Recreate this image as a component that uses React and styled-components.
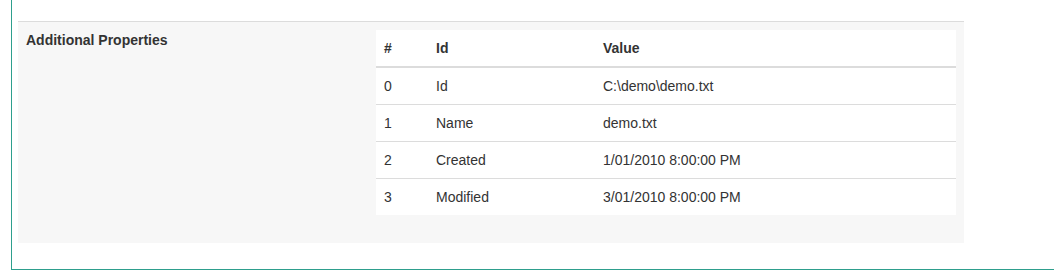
import React from "react";
import styled, { createGlobalStyle } from "styled-components";

const Global = createGlobalStyle`
  html, body { margin: 0; padding: 0; background: #fff; }
  body {
    font-family: "Liberation Sans", Arial, Helvetica, sans-serif;
    font-size: 14px;
    line-height: 20px;
    color: #333;
  }
`;

const Frame = styled.div`
  margin-left: 11px;
  border-left: 1px solid #2e9f8d;
  border-bottom: 1px solid #2e9f8d;
  padding: 21px 0 26px 6px;
`;

const Panel = styled.section`
  width: 946px;
  box-sizing: border-box;
  background: #f7f7f7;
  border-top: 1px solid #dcdcdc;
  padding: 8px 8px 28px 8px;
  display: grid;
  grid-template-columns: 350px 1fr;
`;

const Label = styled.div`
  font-weight: bold;
  color: #333;
`;

const Table = styled.table`
  width: 580px;
  border-collapse: collapse;
  background: #fff;
  table-layout: fixed;
`;

const Th = styled.th`
  text-align: left;
  font-weight: bold;
  padding: 8px;
  height: 20px;
  border-bottom: 2px solid #dcdcdc;
  width: ${(p) => p.$w || "auto"};
`;

const Tr = styled.tr`
  & + & td { border-top: 1px solid #dcdcdc; }
`;

const Td = styled.td`
  padding: 8px;
  height: 20px;
`;

const rows = [
  ["0", "Id", "C:\\demo\\demo.txt"],
  ["1", "Name", "demo.txt"],
  ["2", "Created", "1/01/2010 8:00:00 PM"],
  ["3", "Modified", "3/01/2010 8:00:00 PM"],
];

export default function App() {
  return (
    <>
      <Global />
      <Frame>
        <Panel>
          <Label>Additional Properties</Label>
          <Table>
            <thead>
              <tr>
                <Th $w="36px">#</Th>
                <Th $w="151px">Id</Th>
                <Th>Value</Th>
              </tr>
            </thead>
            <tbody>
              {rows.map((r) => (
                <Tr key={r[0]}>
                  <Td>{r[0]}</Td>
                  <Td>{r[1]}</Td>
                  <Td>{r[2]}</Td>
                </Tr>
              ))}
            </tbody>
          </Table>
        </Panel>
      </Frame>
    </>
  );
}
